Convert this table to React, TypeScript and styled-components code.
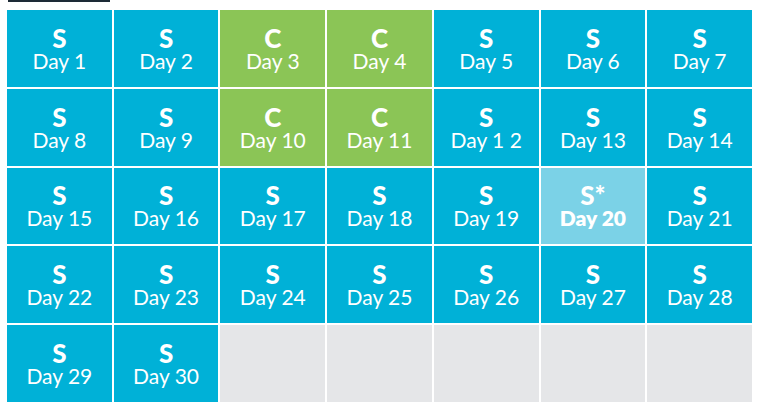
import React from "react";
import styled, { createGlobalStyle } from "styled-components";

const Global = createGlobalStyle`
  html, body { margin: 0; padding: 0; background: #ffffff; }
  body { font-family: Lato, "Open Sans", sans-serif; }
`;

const Page = styled.div`
  display: flex;
  flex-direction: column;
  padding-left: 7px;
  width: 760px;
  height: 412px;
  box-sizing: border-box;
`;

const TopStrip = styled.div`
  width: 102px;
  height: 2px;
  margin-left: 1px;
  background: #1d2b36;
`;

const Grid = styled.div`
  margin-top: 8px;
  width: 745px;
  height: 392px;
  display: grid;
  grid-template-columns: repeat(7, 1fr);
  grid-template-rows: repeat(5, 1fr);
  gap: 2px;
`;

type Kind = "s" | "c" | "hl" | "empty";

const colors: Record<Kind, string> = {
  s: "#00b1d7",
  c: "#8bc556",
  hl: "#7bd2e7",
  empty: "#e5e6e8",
};

const Cell = styled.div<{ $kind: Kind }>`
  background: ${(p) => colors[p.$kind]};
  display: flex;
  flex-direction: column;
  align-items: center;
  justify-content: center;
  color: #ffffff;
  padding-top: 1px;
`;

const Code = styled.div`
  font-weight: 900;
  font-size: 26px;
  line-height: 24px;
`;

const DayLabel = styled.div<{ $bold?: boolean }>`
  font-weight: ${(p) => (p.$bold ? 800 : 400)};
  font-size: 21px;
  line-height: 22px;
`;

type Day = { code: string; label: string; kind: Kind };

const days: Day[] = Array.from({ length: 30 }, (_, i) => {
  const n = i + 1;
  const isC = [3, 4, 10, 11].includes(n);
  const isHl = n === 20;
  return {
    code: isC ? "C" : isHl ? "S*" : "S",
    label: n === 12 ? "Day 1 2" : `Day ${n}`,
    kind: isC ? "c" : isHl ? "hl" : "s",
  };
});

export default function App() {
  return (
    <>
      <Global />
      <Page>
        <TopStrip />
        <Grid>
          {days.map((d) => (
            <Cell key={d.label} $kind={d.kind}>
              <Code>{d.code}</Code>
              <DayLabel $bold={d.kind === "hl"}>{d.label}</DayLabel>
            </Cell>
          ))}
          {Array.from({ length: 5 }, (_, i) => (
            <Cell key={`e${i}`} $kind="empty" />
          ))}
        </Grid>
      </Page>
    </>
  );
}
